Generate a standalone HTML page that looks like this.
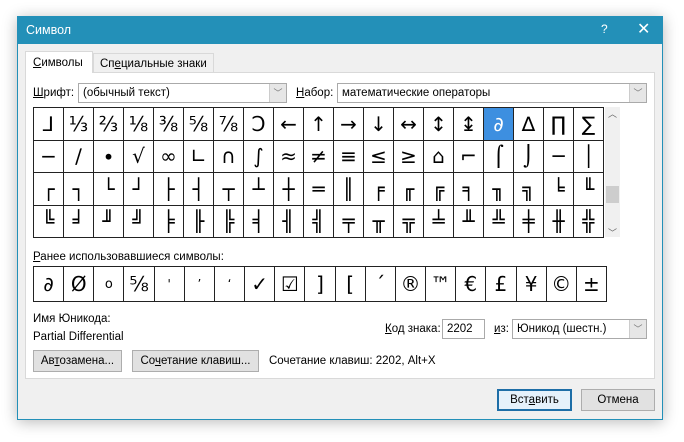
<!DOCTYPE html>
<html><head><meta charset="utf-8"><style>
*{box-sizing:border-box;margin:0;padding:0}
body{width:684px;height:442px;background:#fff;position:relative;overflow:hidden;font-family:"Liberation Sans",sans-serif;font-size:11.5px;color:#000}
.a{position:absolute}
#dlg{left:17px;top:16px;width:646px;height:404px;background:#f0f0f0;border:1px solid #2390b8;box-shadow:0 2px 14px rgba(0,0,0,.28)}
#title{left:17px;top:16px;width:646px;height:28px;background:#2390b8;color:#fff;font-size:12.5px}
.lbl{white-space:nowrap}
.combo{background:#fff;border:1px solid #aaa;height:20px;padding:3px 4px;white-space:nowrap}
.dd{position:absolute;right:0;top:0;width:17px;height:18px;background:#e6e6e6;border-left:1px solid #ccc;color:#777;font-size:9px;text-align:center;line-height:18px}
table{border-collapse:collapse;position:absolute}
td{border:1px solid #222;text-align:center;vertical-align:middle;padding:0;font-family:"DejaVu Sans",sans-serif;color:#000;overflow:hidden}
#grid td{width:30px;height:32.5px;font-size:20px;line-height:20px}
#rec td{width:30px;height:35px;font-size:20px}
.btn{background:#e1e1e1;border:1px solid #adadad;height:22px;text-align:center;line-height:20px;white-space:nowrap}
u{text-decoration:underline}
</style></head><body>
<div class="a" id="dlg"></div>
<div class="a" id="title"><span class="a" style="left:9px;top:7px">Символ</span><span class="a" style="left:584px;top:6px;font-size:12px">?</span><span class="a" style="left:620px;top:3px;font-size:16px;font-family:'DejaVu Sans'">✕</span></div>
<div class="a" style="left:25px;top:72px;width:630px;height:307px;background:#fff;border:1px solid #d9d9d9"></div>
<div class="a" style="left:25px;top:51px;width:68px;height:22px;background:#fff;border:1px solid #d9d9d9;border-bottom:none"></div>
<div class="a" style="left:93px;top:53px;width:121px;height:19px;background:#f0f0f0;border:1px solid #d9d9d9;border-bottom:none"></div>
<span class="a lbl" style="left:33px;top:57px"><u>С</u>имволы</span>
<span class="a lbl" style="left:100px;top:58px">Сп<u>е</u>циальные знаки</span>
<span class="a lbl" style="left:33px;top:87px"><u>Ш</u>рифт:</span>
<div class="a combo" style="left:78px;top:83px;width:209px">(обычный текст)<div class="dd">﹀</div></div>
<span class="a lbl" style="left:296px;top:87px"><u>Н</u>абор:</span>
<div class="a combo" style="left:337px;top:83px;width:310px">математические операторы<div class="dd">﹀</div></div>
<table id="grid" style="left:33px;top:107px;width:571px;height:130px">
<tr><td>⅃</td><td>⅓</td><td>⅔</td><td>⅛</td><td>⅜</td><td>⅝</td><td>⅞</td><td>Ↄ</td><td>←</td><td>↑</td><td>→</td><td>↓</td><td>↔</td><td>↕</td><td>↨</td><td style="background:#3d8fe0;color:#fff;font-style:italic">∂</td><td>∆</td><td>∏</td><td>∑</td></tr>
<tr><td>−</td><td>∕</td><td>∙</td><td>√</td><td>∞</td><td>∟</td><td>∩</td><td>∫</td><td>≈</td><td>≠</td><td>≡</td><td>≤</td><td>≥</td><td>⌂</td><td>⌐</td><td>⌠</td><td>⌡</td><td>─</td><td>│</td></tr>
<tr><td>┌</td><td>┐</td><td>└</td><td>┘</td><td>├</td><td>┤</td><td>┬</td><td>┴</td><td>┼</td><td>═</td><td>║</td><td>╒</td><td>╓</td><td>╔</td><td>╕</td><td>╖</td><td>╗</td><td>╘</td><td>╙</td></tr>
<tr><td>╚</td><td>╛</td><td>╜</td><td>╝</td><td>╞</td><td>╟</td><td>╠</td><td>╡</td><td>╢</td><td>╣</td><td>╤</td><td>╥</td><td>╦</td><td>╧</td><td>╨</td><td>╩</td><td>╪</td><td>╫</td><td>╬</td></tr>
</table>
<div class="a" style="left:605px;top:107px;width:15px;height:130px;background:#f0f0f0"></div>
<div class="a" style="left:606px;top:186px;width:13px;height:17px;background:#cdcdcd"></div>
<span class="a" style="left:608px;top:107px;font-size:9px;color:#666">︿</span>
<span class="a" style="left:608px;top:226px;font-size:9px;color:#666">﹀</span>
<span class="a lbl" style="left:33px;top:251px"><u>Р</u>анее использовавшиеся символы:</span>
<table id="rec" style="left:33px;top:266px;width:574px;height:35px">
<tr><td style="font-style:italic">∂</td><td>Ø</td><td style="font-size:13px">o</td><td>⅝</td><td style="font-size:12px">'</td><td style="font-size:12px">’</td><td style="font-size:12px">‘</td><td>✓</td><td>☑</td><td>]</td><td>[</td><td>´</td><td>®</td><td>™</td><td>€</td><td>£</td><td>¥</td><td>©</td><td>±</td></tr>
</table>
<span class="a lbl" style="left:33px;top:313px">Имя Юникода:</span>
<span class="a lbl" style="left:33px;top:331px">Partial Differential</span>
<span class="a lbl" style="left:385px;top:323px"><u>К</u>од знака:</span>
<div class="a combo" style="left:442px;top:319px;width:43px;height:20px">2202</div>
<span class="a lbl" style="left:494px;top:323px"><u>и</u>з:</span>
<div class="a combo" style="left:512px;top:319px;width:135px;height:20px">Юникод (шестн.)<div class="dd">﹀</div></div>
<div class="a btn" style="left:33px;top:350px;width:89px">Ав<u>т</u>озамена...</div>
<div class="a btn" style="left:132px;top:350px;width:127px">Со<u>ч</u>етание клавиш...</div>
<span class="a lbl" style="left:269px;top:355px">Сочетание клавиш: 2202, Alt+X</span>
<div class="a btn" style="left:497px;top:389px;width:75px;border:2px solid #1e6ea7;line-height:18px;background:#e5f1fb">Вст<u>а</u>вить</div>
<div class="a btn" style="left:581px;top:389px;width:74px">Отмена</div>
</body></html>
